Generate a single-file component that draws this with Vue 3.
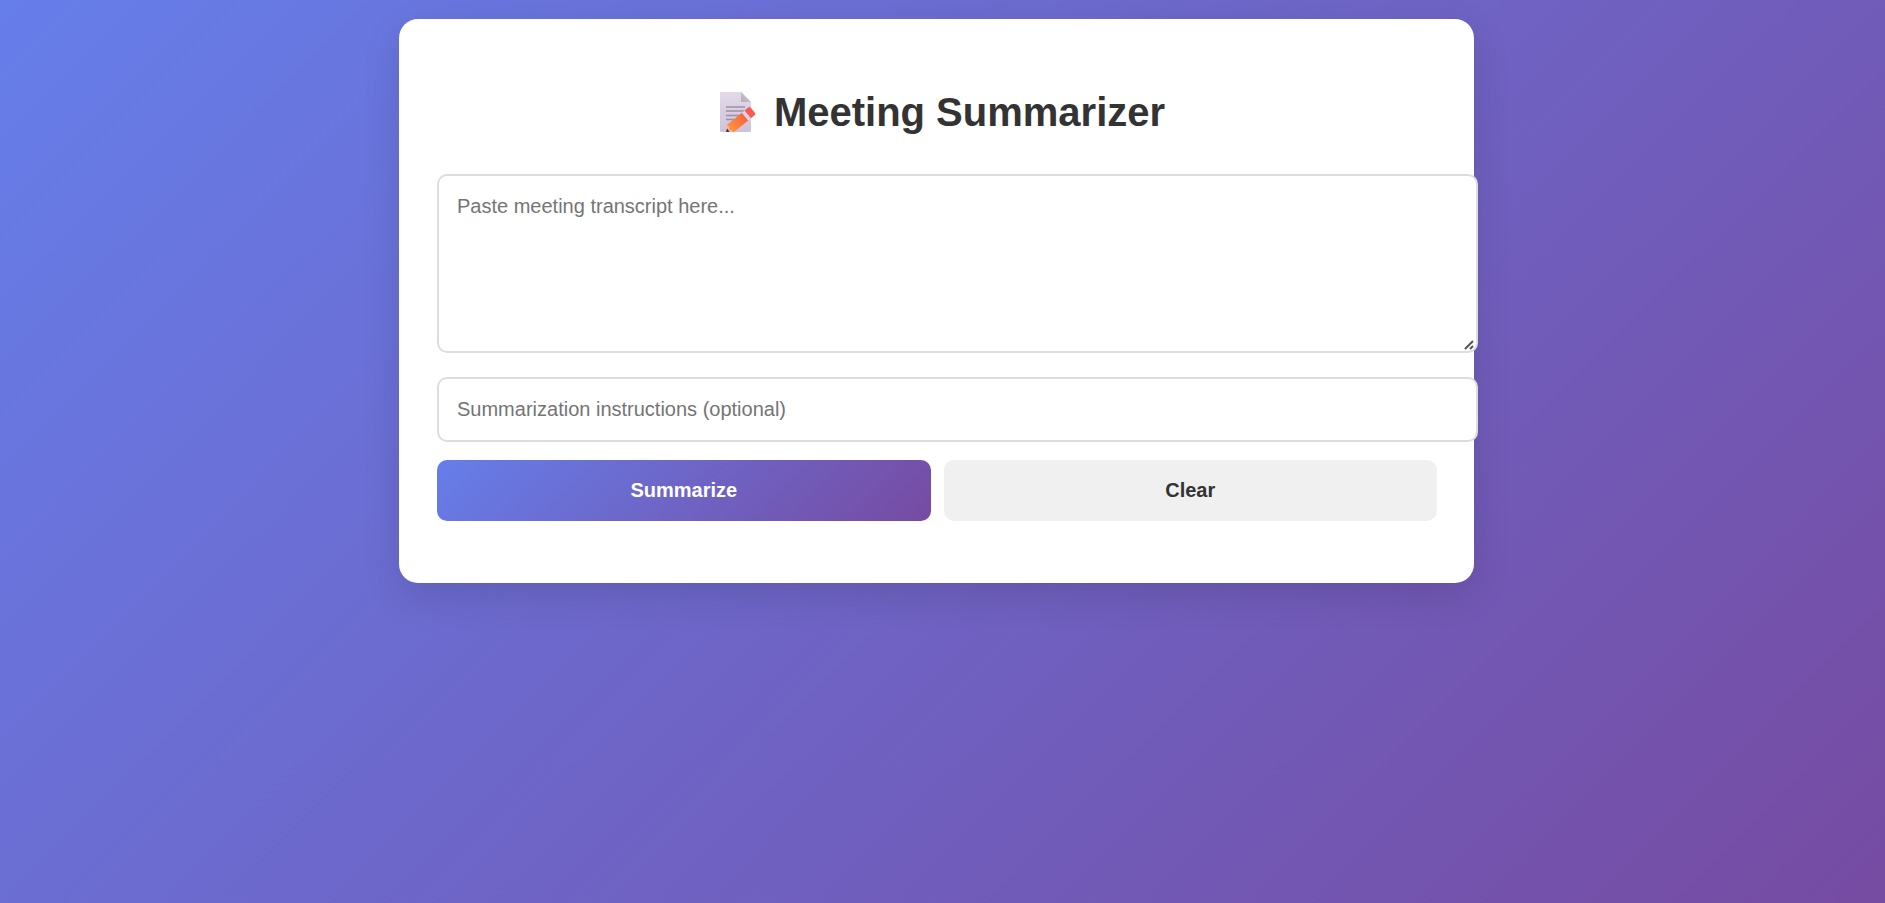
<script setup>
import { ref } from 'vue'

const transcript = ref('')
const instructions = ref('')

function clearForm() {
  transcript.value = ''
  instructions.value = ''
}
</script>

<template>
  <main class="page">
    <form class="card" @submit.prevent>
      <h1 class="title">
        <svg class="memo" viewBox="0 0 54 42" width="54" height="42" aria-hidden="true">
          <defs>
            <linearGradient id="paper" x1="0" y1="0" x2="0" y2="1">
              <stop offset="0" stop-color="#e2dae8" />
              <stop offset="1" stop-color="#cfc2d9" />
            </linearGradient>
            <linearGradient id="fold" x1="0" y1="1" x2="1" y2="0">
              <stop offset="0" stop-color="#b5adba" />
              <stop offset="1" stop-color="#d3cdd8" />
            </linearGradient>
            <linearGradient id="pencil" x1="0" y1="0" x2="1" y2="0">
              <stop offset="0" stop-color="#ff9340" />
              <stop offset="1" stop-color="#f8663c" />
            </linearGradient>
          </defs>
          <path d="M12 1H32L42 11V40a1 1 0 0 1-1 1H12A1 1 0 0 1 11 40V2A1 1 0 0 1 12 1Z" fill="url(#paper)" />
          <path d="M32 1 42 11H32Z" fill="url(#fold)" />
          <path d="M17 16H36M17 20H36M17 24.500H34M17 28.500H30" stroke="#9b91a5" stroke-width="1.500" />
          <g transform="translate(17 41) rotate(-39)">
            <path d="M0 0 6 -4.500V4.500Z" fill="#f3b695" />
            <path d="M0 0 3 -2V2Z" fill="#40283f" />
            <path d="M5 -5H25V5H5L6 2.500 4 0 6 -2Z" fill="url(#pencil)" />
            <path d="M24.500 -5h4v10h-4Z" fill="#ddd3ee" />
            <path d="M28 -5h5a1.500 1.500 0 0 1 1.500 1.500v7a1.500 1.500 0 0 1-1.500 1.500h-5Z" fill="#fb5a50" />
          </g>
        </svg>
        <span>Meeting Summarizer</span>
      </h1>

      <div class="transcript-box">
        <textarea
          v-model="transcript"
          class="field transcript"
          aria-label="Meeting transcript"
          placeholder="Paste meeting transcript here..."
        ></textarea>
        <svg class="grip" viewBox="0 0 10 10" width="10" height="10" aria-hidden="true">
          <path d="M1 9 9 1M6 9 9 6" fill="none" stroke="#555" stroke-width="2" />
        </svg>
      </div>
      <input
        v-model="instructions"
        class="field instructions"
        type="text"
        aria-label="Summarization instructions"
        placeholder="Summarization instructions (optional)"
      />

      <div class="actions">
        <button class="button primary" type="submit">Summarize</button>
        <button class="button secondary" type="button" @click="clearForm">Clear</button>
      </div>
    </form>
  </main>
</template>

<style>
body {
  margin: 0;
}
</style>

<style scoped>
.page {
  box-sizing: border-box;
  min-height: 100vh;
  padding: 19px 31px 19px 19px;
  background: linear-gradient(135deg, #667eea, #764ba2);
  font-family: Arial, "Liberation Sans", sans-serif;
  color: #333;
}

.card {
  max-width: 1000px;
  margin: 0 auto;
  padding: 66px 37px 62px 38px;
  border-radius: 19px;
  background: #fff;
  box-shadow: 0 12px 38px rgba(0, 0, 0, 0.12);
}

.title {
  display: flex;
  align-items: center;
  justify-content: center;
  gap: 11px;
  margin: 0 0 35px;
  font-size: 40px;
  line-height: 54px;
  font-weight: 700;
}

.memo {
  flex: none;
}

.field {
  display: block;
  box-sizing: content-box;
  width: 100%;
  padding: 19px 19px 19px 18px;
  border: 2px solid #ddd;
  border-radius: 10px;
  outline: none;
  background: #fff;
  font: 20px/22px Arial, "Liberation Sans", sans-serif;
  color: #333;
}

.field::placeholder {
  color: #757575;
}

.transcript-box {
  position: relative;
  margin: 0 0 24px;
}

.transcript {
  height: 137px;
  resize: vertical;
}

.transcript::-webkit-resizer {
  background: transparent;
}

.grip {
  position: absolute;
  right: -37px;
  bottom: 3px;
  pointer-events: none;
}

.instructions {
  height: 23px;
  margin: 0 0 18px;
}

.actions {
  display: flex;
  gap: 13px;
}

.button {
  flex: 1;
  padding: 19px;
  border: 0;
  border-radius: 10px;
  font: 700 20px/23px Arial, "Liberation Sans", sans-serif;
  cursor: pointer;
}

.primary {
  background: linear-gradient(135deg, #667eea, #764ba2);
  color: #fff;
}

.secondary {
  background: #f0f0f0;
  color: #333;
}
</style>
